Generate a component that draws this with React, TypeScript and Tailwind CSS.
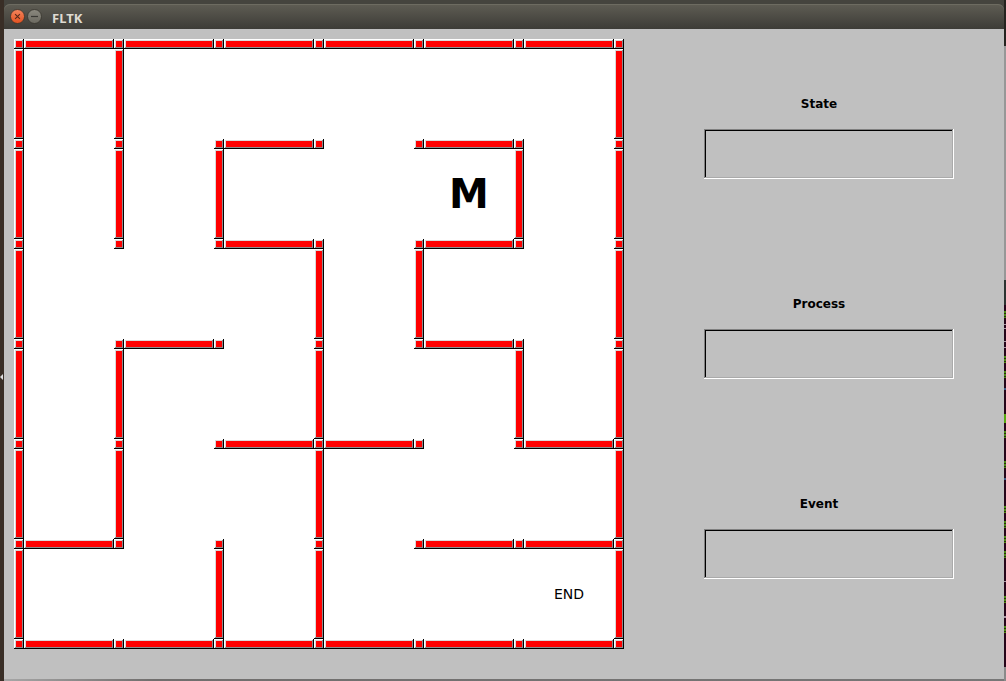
import React from "react";

const WALL_ROWS = ["111111", "001010", "001010", "010010", "001101", "100011", "111111"];
const WALL_COLUMNS = ["1100001", "1110011", "1001101", "1101011", "1101001", "1011001"];

const LABELS: Record<string, React.ReactNode> = {
  "3-9": <span className="text-[40px] leading-none font-bold">M</span>,
  "11-11": <span className="text-sm">END</span>,
};

const RAISED =
  "bg-[#ff0000] shadow-[inset_0_-1px_#000,inset_-1px_0_#000,inset_1px_1px_#fff,inset_-2px_-2px_#8c8c8c,inset_2px_2px_#d9d9d9]";

function isWall(row: number, col: number) {
  if (row % 2 === 0 && col % 2 === 0) return true;
  if (row % 2 === 0) return WALL_ROWS[row / 2][(col - 1) / 2] === "1";
  if (col % 2 === 0) return WALL_COLUMNS[(row - 1) / 2][col / 2] === "1";
  return false;
}

function Maze() {
  const cells: React.ReactNode[] = [];
  for (let row = 0; row < 13; row++) {
    for (let col = 0; col < 13; col++) {
      const key = `${row}-${col}`;
      cells.push(
        <div key={key} className={isWall(row, col) ? RAISED : "flex items-center justify-center bg-white"}>
          {LABELS[key]}
        </div>,
      );
    }
  }
  return (
    <div className="grid shrink-0 grid-cols-[repeat(6,10px_90px)_10px] grid-rows-[repeat(6,10px_90px)_10px] self-start">
      {cells}
    </div>
  );
}

function Field({ name }: { name: string }) {
  const id = name.toLowerCase();
  return (
    <div className="flex w-[250px] flex-col gap-[15px]">
      <label htmlFor={id} className="pr-5 text-center text-xs leading-5 font-bold">
        {name}
      </label>
      <input
        id={id}
        readOnly
        className="h-[50px] w-full bg-transparent px-2 text-sm outline-none shadow-[inset_0_-1px_#fff,inset_-1px_0_#fff,inset_1px_1px_#808080,inset_-2px_-2px_#aaa,inset_2px_2px_#000]"
      />
    </div>
  );
}

function TitleBar() {
  return (
    <header className="flex h-[25px] items-center gap-0.5 rounded-t-md bg-linear-to-b from-[#5f5d54] to-[#3d3c37] pl-1.5 shadow-[inset_0_1px_#6d6b61]">
      <button type="button" aria-label="Close" className="size-[15px]">
        <svg viewBox="0 0 15 15" className="size-full">
          <defs>
            <linearGradient id="close-fill" x1="0" y1="0" x2="0" y2="1">
              <stop offset="0" stopColor="#f5855d" />
              <stop offset="1" stopColor="#e2511f" />
            </linearGradient>
          </defs>
          <circle cx="7.5" cy="7.5" r="7" fill="url(#close-fill)" stroke="#36332c" strokeWidth="0.8" />
          <path d="M5.1 5.1l4.8 4.8M9.9 5.1l-4.8 4.8" stroke="#5a2a1a" strokeWidth="1.1" />
        </svg>
      </button>
      <button type="button" aria-label="Minimize" className="size-[15px]">
        <svg viewBox="0 0 15 15" className="size-full">
          <defs>
            <linearGradient id="min-fill" x1="0" y1="0" x2="0" y2="1">
              <stop offset="0" stopColor="#8b897f" />
              <stop offset="1" stopColor="#6b6960" />
            </linearGradient>
          </defs>
          <circle cx="7.5" cy="7.5" r="7" fill="url(#min-fill)" stroke="#36332c" strokeWidth="0.8" />
          <path d="M4 7.5h7" stroke="#3a3934" strokeWidth="1.2" />
        </svg>
      </button>
      <h1 className="pt-0.5 pl-2 font-['Noto_Sans',sans-serif] text-[13px] leading-4 font-bold text-[#dfdbd2]">FLTK</h1>
    </header>
  );
}

const PROMPT = "h-[7px] bg-[repeating-linear-gradient(#4a8a12_0_2px,#2a2a10_2px_3px)]";
const TEXT_LINE = "h-px bg-[#a898a4]";
const PATH = "h-0.5 bg-[#3e5c86]";

const TERMINAL_MARKS: [string, string][] = [
  ["", "h-[25px] bg-[#2c3331]"],
  ["mt-1.5", PROMPT],
  ["mt-1.5", TEXT_LINE],
  ["mt-[3px]", TEXT_LINE],
  ["mt-3", TEXT_LINE],
  ["mt-[5px]", TEXT_LINE],
  ["mt-2", PROMPT],
  ["mt-2", PROMPT],
  ["mt-2.5", PATH],
  ["mt-6", "h-[9px] bg-[#57a80f]"],
  ["mt-2", PROMPT],
  ["mt-[23px]", PROMPT],
  ["mt-2.5", PATH],
  ["mt-[26px]", PROMPT],
  ["mt-2", PROMPT],
  ["mt-2", PROMPT],
  ["mt-2", PROMPT],
  ["mt-[23px]", TEXT_LINE],
  ["mt-3.5", PROMPT],
  ["mt-[13px]", "h-0.5 bg-[#a898a4]"],
  ["mt-2", PROMPT],
];

export default function App() {
  return (
    <div className="flex min-h-screen bg-[#45443e] font-['DejaVu_Sans',sans-serif] text-black">
      <div className="flex w-1 shrink-0 flex-col justify-center bg-[#392e26] pt-[73px]">
        <svg viewBox="0 0 4 6" className="h-1.5 w-1">
          <path d="M3 0v6L0 3z" fill="#ddd" />
        </svg>
      </div>
      <div className="flex min-w-0 flex-1 flex-col pt-1">
        <TitleBar />
        <main className="flex flex-1 bg-[#c0c0c0] pt-2.5 pb-[30px] pl-2.5">
          <Maze />
          <section className="flex flex-1 flex-col items-center gap-[115px] pt-[55px] pl-[30px]">
            <Field name="State" />
            <Field name="Process" />
            <Field name="Event" />
          </section>
        </main>
        <div className="h-0.5 bg-linear-to-r from-[#a6a6a6] via-[#706e6d] via-15% to-[#777]" />
      </div>
      <div className="flex w-0.5 shrink-0 flex-col bg-[#260519]">
        <div className="h-[46px] bg-[#25231f]" />
        <div className="h-[234px] bg-[#979797]" />
        {TERMINAL_MARKS.map(([offset, mark], i) => (
          <div key={i} className={`${offset} ${mark}`} />
        ))}
        <div className="mt-auto h-3.5 bg-[#8a8a8a]" />
      </div>
    </div>
  );
}
